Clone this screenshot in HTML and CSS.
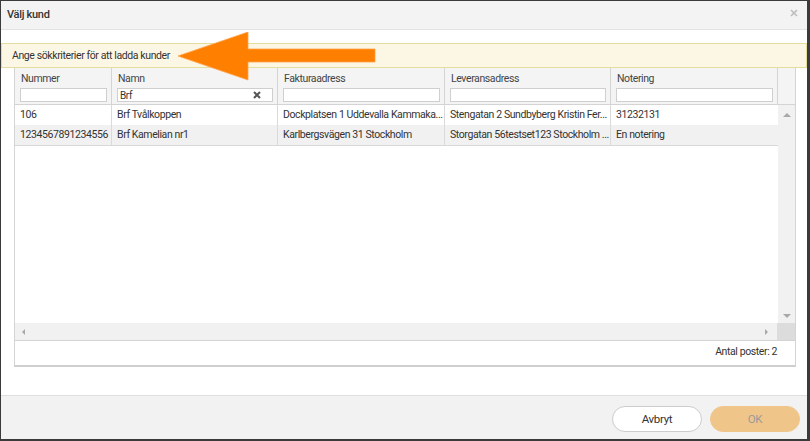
FILE: index.html
```html
<!DOCTYPE html>
<html lang="sv">
<head>
    <meta charset="UTF-8">
    <title>Välj kund</title>
    <link rel="stylesheet" href="styles.css">
</head>
<body>
    <div class="dialog">
        <div class="dialog-header">
            <div class="dialog-title">Välj kund</div>
            <svg class="dialog-close" width="8" height="8" viewBox="0 0 8 8">
                <path d="M1 1L7 7M7 1L1 7" stroke="#bdbdbd" stroke-width="1.6"/>
            </svg>
        </div>

        <div class="dialog-body">
            <div class="info-banner">Ange sökkriterier för att ladda kunder</div>

            <div class="grid">
                <div class="grid-head">
                    <div class="col c1">
                        <div class="col-label">Nummer</div>
                        <div class="filter"></div>
                    </div>
                    <div class="col c2">
                        <div class="col-label">Namn</div>
                        <div class="filter">
                            <span class="filter-value">Brf</span>
                            <svg class="filter-clear" width="8" height="8" viewBox="0 0 8 8">
                                <path d="M1 1L7 7M7 1L1 7" stroke="#555" stroke-width="2"/>
                            </svg>
                        </div>
                    </div>
                    <div class="col c3">
                        <div class="col-label">Fakturaadress</div>
                        <div class="filter"></div>
                    </div>
                    <div class="col c4">
                        <div class="col-label">Leveransadress</div>
                        <div class="filter"></div>
                    </div>
                    <div class="col c5">
                        <div class="col-label">Notering</div>
                        <div class="filter"></div>
                    </div>
                    <div class="col-filler"></div>
                </div>

                <div class="grid-main">
                    <div class="grid-rows">
                        <div class="row">
                            <div class="cell c1">106</div>
                            <div class="cell c2">Brf Tvålkoppen</div>
                            <div class="cell c3">Dockplatsen 1 Uddevalla Kammaka...</div>
                            <div class="cell c4">Stengatan 2 Sundbyberg Kristin Fer...</div>
                            <div class="cell c5">31232131</div>
                        </div>
                        <div class="row alt">
                            <div class="cell c1">1234567891234556</div>
                            <div class="cell c2">Brf Kamelian nr1</div>
                            <div class="cell c3">Karlbergsvägen 31 Stockholm</div>
                            <div class="cell c4">Storgatan 56testset123 Stockholm ...</div>
                            <div class="cell c5">En notering</div>
                        </div>
                    </div>
                    <div class="vscroll">
                        <span class="tri up"></span>
                        <span class="tri down"></span>
                    </div>
                </div>

                <div class="hscroll">
                    <div class="hscroll-track">
                        <span class="tri left"></span>
                        <span class="tri right"></span>
                    </div>
                    <div class="hscroll-corner"></div>
                </div>

                <div class="grid-footer">Antal poster: 2</div>
            </div>
        </div>

        <div class="dialog-footer">
            <button class="btn btn-cancel">Avbryt</button>
            <button class="btn btn-ok">OK</button>
        </div>

        <!-- callout arrow pointing at the banner text -->
        <svg class="callout-arrow" width="200" height="50" viewBox="0 0 200 50">
            <polygon points="0,24 70,0 70,17 197,17 197,30 70,30 70,48" fill="#ff8000" stroke="#ffa24a" stroke-width="0.8"/>
        </svg>
    </div>
</body>
</html>
```

FILE: styles.css
```css
/* Global */
body {
    margin: 0;
    padding: 0;
    background-color: #3b3b3b;
    font-family: Roboto, "Liberation Sans", sans-serif;
    font-size: 10.5px;
    letter-spacing: -0.4px;
    color: #333;
}

/* Dialog */
.dialog {
    position: relative;
    display: flex;
    flex-direction: column;
    width: 806px;
    height: 438px;
    margin: 1px 0 0 1px;
    background-color: #fff;
    overflow: hidden;
}

.dialog-header {
    display: flex;
    justify-content: space-between;
    align-items: center;
    height: 28px;
    padding: 0 9px 0 6px;
    background-color: #f3f3f3;
    border-bottom: 1px solid #e2e2e2;
}

.dialog-title {
    font-size: 11px;
    font-weight: 500;
    letter-spacing: -0.3px;
    color: #333;
    margin-top: -2px;
}

.dialog-close {
    margin-top: -4px;
}

.dialog-body {
    flex: 1;
    padding-top: 13px;
}

/* Info banner */
.info-banner {
    height: 23px;
    line-height: 23px;
    padding-left: 10px;
    background-color: #fcf7e4;
    border: 1px solid #e5dd9e;
    color: #333;
}

/* Grid */
.grid {
    display: flex;
    flex-direction: column;
    width: 780px;
    height: 297px;
    margin-left: 13px;
    border: 1px solid #d4d4d4;
    border-top: none;
    border-bottom: 2px solid #cfcfcf;
}

.c1 { width: 97px; }
.c2 { width: 166px; }
.c3 { width: 167px; }
.c4 { width: 166px; }
.c5 { width: 167px; }

.grid-head {
    display: flex;
    height: 36px;
    background-color: #f4f4f4;
    border-bottom: 1px solid #d4d4d4;
}

.col {
    box-sizing: border-box;
    padding: 4px 4px 0 5px;
    border-right: 1px solid #d4d4d4;
}

.col-label {
    height: 16px;
    padding-left: 1px;
    color: #444;
}

.filter {
    display: flex;
    align-items: center;
    justify-content: space-between;
    height: 12px;
    padding: 0 11px 0 2px;
    background-color: #fff;
    border: 1px solid #cfcfcf;
}

.filter-value {
    font-size: 10px;
    color: #333;
}

.col-filler {
    flex: 1;
}

.grid-main {
    display: flex;
    flex: 1;
}

.grid-rows {
    flex: 1;
}

.row {
    display: flex;
    height: 20px;
    background-color: #fff;
}

.row.alt {
    background-color: #f1f1f1;
    border-bottom: 1px solid #d8d8d8;
}

.cell {
    box-sizing: border-box;
    padding: 0 1px 0 5px;
    line-height: 20px;
    white-space: nowrap;
    overflow: hidden;
    text-overflow: ellipsis;
    border-right: 1px solid #dadada;
}

.cell.c5 {
    border-right: none;
}

.vscroll {
    display: flex;
    flex-direction: column;
    justify-content: space-between;
    align-items: center;
    width: 18px;
    padding: 8px 0 5px;
    background-color: #f1f1f1;
}

.hscroll {
    display: flex;
    height: 17px;
}

.hscroll-track {
    flex: 1;
    display: flex;
    justify-content: space-between;
    align-items: center;
    padding: 0 9px 0 7px;
    background-color: #f1f1f1;
}

.hscroll-corner {
    width: 18px;
    background-color: #dcdcdc;
}

/* Scroll arrows */
.tri {
    width: 0;
    height: 0;
}

.tri.up {
    border-left: 4px solid transparent;
    border-right: 4px solid transparent;
    border-bottom: 4px solid #a8a8a8;
}

.tri.down {
    border-left: 4px solid transparent;
    border-right: 4px solid transparent;
    border-top: 4px solid #a8a8a8;
}

.tri.left {
    border-top: 3px solid transparent;
    border-bottom: 3px solid transparent;
    border-right: 3px solid #a8a8a8;
}

.tri.right {
    border-top: 3px solid transparent;
    border-bottom: 3px solid transparent;
    border-left: 3px solid #a8a8a8;
}

.grid-footer {
    height: 24px;
    line-height: 22px;
    padding-right: 18px;
    text-align: right;
    border-top: 1px solid #d4d4d4;
    color: #333;
}

/* Footer */
.dialog-footer {
    display: flex;
    justify-content: flex-end;
    gap: 8px;
    height: 33px;
    padding: 10px 7px 0 0;
    background-color: #f2f2f2;
    border-top: 1px solid #dedede;
}

.btn {
    width: 90px;
    height: 26px;
    border-radius: 13px;
    font-family: Roboto, "Liberation Sans", sans-serif;
    font-size: 11.5px;
    letter-spacing: -0.3px;
    cursor: pointer;
}

.btn-cancel {
    background-color: #fff;
    border: 1px solid #cccccc;
    color: #333;
}

.btn-ok {
    background-color: #f0c589;
    border: 1px solid #f0c589;
    color: #9b9b9b;
}

/* Callout arrow */
.callout-arrow {
    position: absolute;
    left: 177px;
    top: 31px;
}
```
